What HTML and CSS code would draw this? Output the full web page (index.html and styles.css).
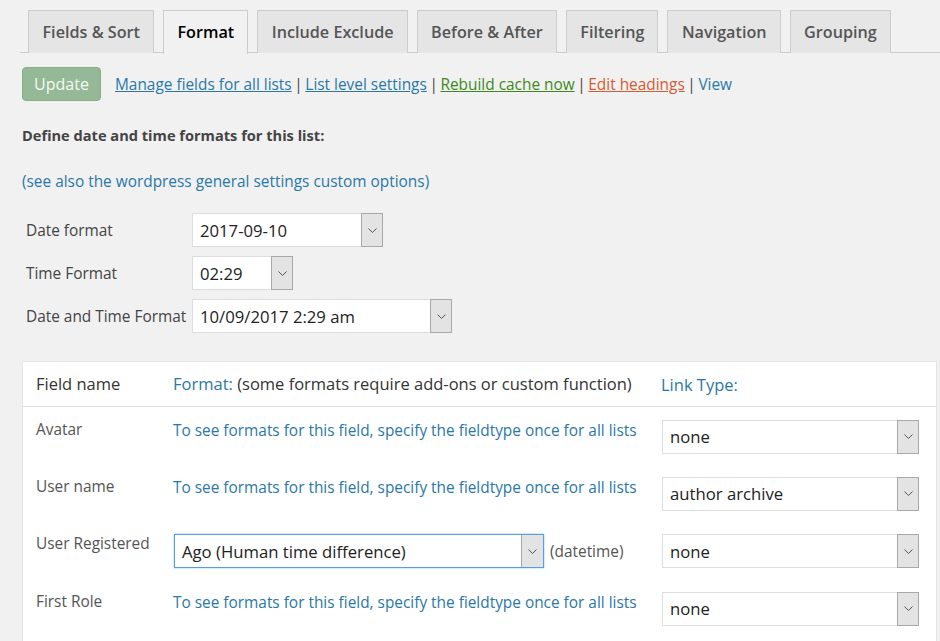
FILE: index.html
```html
<!DOCTYPE html>
<html>
<head>
<meta charset="utf-8">
<link rel="stylesheet" href="styles.css">
</head>
<body>
<div class="wrap">
  <nav class="tabs">
    <a class="tab">Fields &amp; Sort</a>
    <a class="tab active">Format</a>
    <a class="tab">Include Exclude</a>
    <a class="tab">Before &amp; After</a>
    <a class="tab">Filtering</a>
    <a class="tab">Navigation</a>
    <a class="tab">Grouping</a>
  </nav>

  <div class="toolbar">
    <button class="btn-update">Update</button>
    <div class="links">
      <a class="lnk blue">Manage fields for all lists</a><span class="sep">|</span><a class="lnk blue">List level settings</a><span class="sep">|</span><a class="lnk green">Rebuild cache now</a><span class="sep">|</span><a class="lnk red">Edit headings</a><span class="sep">|</span><a class="lnk blue plain">View</a>
    </div>
  </div>

  <h3 class="heading">Define date and time formats for this list:</h3>
  <p class="see-also"><a>(see also the wordpress general settings custom options)</a></p>

  <div class="dt-form">
    <label>Date format</label>
    <div class="sel w-date"><span class="val">2017-09-10</span><span class="arr"><svg width="9" height="5" viewBox="0 0 9 5"><path d="M0.5 0.5L4.5 4.5L8.5 0.5" fill="none" stroke="#555" stroke-width="1"/></svg></span></div>
    <label>Time Format</label>
    <div class="sel w-time"><span class="val">02:29</span><span class="arr"><svg width="9" height="5" viewBox="0 0 9 5"><path d="M0.5 0.5L4.5 4.5L8.5 0.5" fill="none" stroke="#555" stroke-width="1"/></svg></span></div>
    <label>Date and Time Format</label>
    <div class="sel w-dt"><span class="val">10/09/2017 2:29 am</span><span class="arr"><svg width="9" height="5" viewBox="0 0 9 5"><path d="M0.5 0.5L4.5 4.5L8.5 0.5" fill="none" stroke="#555" stroke-width="1"/></svg></span></div>
  </div>

  <div class="fields">
    <div class="frow head">
      <div class="c1">Field name</div>
      <div class="c2"><span class="blue-t">Format:</span> (some formats require add-ons or custom function)</div>
      <div class="c3"><span class="blue-t">Link Type:</span></div>
    </div>
    <div class="frow">
      <div class="c1">Avatar</div>
      <div class="c2"><a class="hint">To see formats for this field, specify the fieldtype once for all lists</a></div>
      <div class="c3"><div class="sel w-link"><span class="val">none</span><span class="arr"><svg width="9" height="5" viewBox="0 0 9 5"><path d="M0.5 0.5L4.5 4.5L8.5 0.5" fill="none" stroke="#555" stroke-width="1"/></svg></span></div></div>
    </div>
    <div class="frow">
      <div class="c1">User name</div>
      <div class="c2"><a class="hint">To see formats for this field, specify the fieldtype once for all lists</a></div>
      <div class="c3"><div class="sel w-link"><span class="val">author archive</span><span class="arr"><svg width="9" height="5" viewBox="0 0 9 5"><path d="M0.5 0.5L4.5 4.5L8.5 0.5" fill="none" stroke="#555" stroke-width="1"/></svg></span></div></div>
    </div>
    <div class="frow">
      <div class="c1">User Registered</div>
      <div class="c2 fmt"><div class="sel w-fmt focus"><span class="val">Ago (Human time difference)</span><span class="arr"><svg width="9" height="5" viewBox="0 0 9 5"><path d="M0.5 0.5L4.5 4.5L8.5 0.5" fill="none" stroke="#555" stroke-width="1"/></svg></span></div><span class="ftype">(datetime)</span></div>
      <div class="c3"><div class="sel w-link"><span class="val">none</span><span class="arr"><svg width="9" height="5" viewBox="0 0 9 5"><path d="M0.5 0.5L4.5 4.5L8.5 0.5" fill="none" stroke="#555" stroke-width="1"/></svg></span></div></div>
    </div>
    <div class="frow">
      <div class="c1">First Role</div>
      <div class="c2"><a class="hint">To see formats for this field, specify the fieldtype once for all lists</a></div>
      <div class="c3"><div class="sel w-link"><span class="val">none</span><span class="arr"><svg width="9" height="5" viewBox="0 0 9 5"><path d="M0.5 0.5L4.5 4.5L8.5 0.5" fill="none" stroke="#555" stroke-width="1"/></svg></span></div></div>
    </div>
  </div>
</div>
</body>
</html>
```

FILE: styles.css
```css
* { box-sizing: border-box; }
html, body { margin: 0; padding: 0; }
body {
  background: #f1f1f1;
  font-family: "Open Sans", "Noto Sans", sans-serif;
  color: #444;
  font-size: 15px;
  overflow: hidden;
}
.wrap { padding: 10px 0 0 20px; }

.tabs {
  display: flex;
  gap: 9px;
  padding-left: 8px;
  border-bottom: 1px solid #ccc;
  height: 43px;
}
.tab {
  display: flex;
  align-items: center;
  height: 43px;
  padding: 0 13px 1px 13.5px;
  background: #e5e5e5;
  border: 1px solid #ccc;
  border-bottom: none;
  font-weight: 600;
  font-size: 16.2px;
  color: #555;
}
.tab.active {
  background: #f1f1f1;
  color: #000;
  height: 44px;
  padding-bottom: 2px;
}

.toolbar {
  display: flex;
  align-items: center;
  margin-top: 14px;
  padding-left: 2px;
}
.btn-update {
  width: 79px;
  height: 34px;
  background: #95b897;
  border: 1px solid #88ab8a;
  border-radius: 4px;
  color: #f4fbf2;
  font-family: inherit;
  font-size: 16px;
  padding: 0;
}
.links { margin-left: 14px; font-size: 15.4px; }
.lnk { text-decoration: underline; }
.lnk.blue { color: #2a78a8; }
.lnk.green { color: #3c8a1c; }
.lnk.red { color: #d65a32; }
.lnk.plain { text-decoration: none; }
.sep { color: #444; margin: 0 2.6px; }

.heading {
  margin: 24px 0 0 2px;
  font-size: 14.6px;
  font-weight: 700;
  color: #444;
}
.see-also {
  margin: 26px 0 0 2px;
  font-size: 15.4px;
}
.see-also a { color: #2a78a8; }

.dt-form {
  display: grid;
  grid-template-columns: 166px auto;
  row-gap: 9px;
  justify-items: start;
  align-items: center;
  margin: 21px 0 0 6px;
}
.dt-form label { font-size: 15.4px; color: #444; }

.sel {
  display: inline-flex;
  height: 34px;
  background: #fff;
  border: 1px solid #ddd;
  color: #222;
  font-size: 16.7px;
}
.sel .val {
  flex: 1;
  display: flex;
  align-items: center;
  padding-left: 7px;
  white-space: nowrap;
}
.sel .arr {
  width: 22px;
  margin: -1px -1px -1px 0;
  background: #e3e3e3;
  border: 1px solid #a8a8a8;
  display: flex;
  align-items: center;
  justify-content: center;
}
.w-date { width: 191px; }
.w-time { width: 101px; }
.w-dt { width: 260px; }
.w-link { width: 257px; margin-left: 1px; }
.w-fmt { width: 370px; margin-left: 1px; }
.sel.focus { border-color: #5b9dd9; box-shadow: 0 0 2px rgba(30,140,190,.5); }
.sel.focus .arr { margin: 0; border: none; border-left: 1px solid #a8a8a8; }

.fields {
  margin: 28px 0 0 2px;
  width: 915px;
  background: #fff;
  border: 1px solid #e5e5e5;
  border-bottom: none;
  height: 300px;
}
.frow {
  display: flex;
  align-items: flex-start;
  padding: 12.5px 0 10.9px 13px;
}
.frow.head {
  padding: 0 0 0 13px;
  height: 45px;
  align-items: center;
  border-bottom: 1px solid #e1e1e1;
  font-size: 16.5px;
  color: #333;
}
.c1 { width: 137px; font-size: 15.4px; color: #555; line-height: 20px; }
.head .c1 { font-size: 16.5px; color: #333; }
.c2 { width: 488px; line-height: 20px; }
.c3 { flex: 1; }
.blue-t { color: #2a78a8; }
.hint { color: #2a78a8; font-size: 15.4px; }
.c2.fmt { display: flex; align-items: center; line-height: normal; }
.ftype { margin-left: 6px; font-size: 15.4px; color: #555; }
```
